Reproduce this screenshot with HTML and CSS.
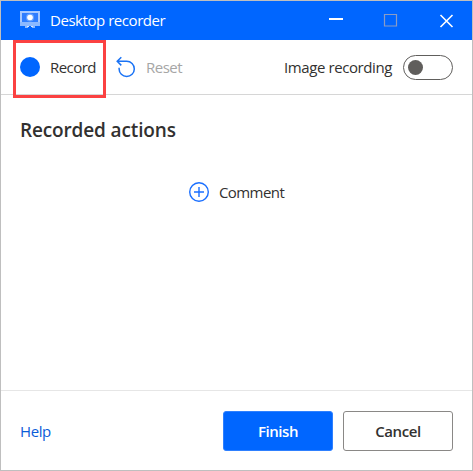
FILE: index.html
```html
<!DOCTYPE html>
<html lang="en">
<head>
<meta charset="utf-8">
<title>Desktop recorder</title>
<link rel="stylesheet" href="styles.css">
</head>
<body>
<div class="window">
  <header class="titlebar">
    <svg class="app-icon" width="20" height="18" viewBox="0 0 20 18">
      <path fill="#a6c8ff" d="M0 0h20v12H0z"/>
      <path fill="#2e7dff" d="M2 2h16v9H2z"/>
      <path fill="#8bb8ff" d="M0 11h20v4H0zM5 15h3v2H5zM12 15h3v2h-3z"/>
      <path fill="#d8e8ff" d="M7 15h2v1H7zM11 15h2v1h-2z"/>
      <circle cx="10" cy="6.5" r="4" fill="#69a3ff"/>
      <circle cx="10" cy="6.5" r="2.8" fill="#fff"/>
    </svg>
    <span class="title">Desktop recorder</span>
    <svg class="controls" width="126" height="16" viewBox="0 0 126 16">
      <path d="M0 6h14" stroke="#fff" stroke-width="2"/>
      <path d="M55.5 1.5h12v11.5h-12z" fill="none" stroke="#8b9cc4" stroke-width="1.2"/>
      <path d="M111.5 2l12 12m0-12l-12 12" stroke="#fff" stroke-width="1.6"/>
    </svg>
  </header>
  <div class="toolbar">
    <div class="record"><span class="dot"></span><span class="record-text">Record</span></div>
    <svg class="reset-icon" width="20" height="22" viewBox="0 0 20 22" fill="none" stroke="#1a73f5" stroke-width="1.5">
      <path d="M5.3 1.2L1.2 5.3l4.1 4.1M1.5 5.3h9.2a7.6 7.6 0 1 1-7.6 7.6v-1.2"/>
    </svg>
    <span class="reset-text">Reset</span>
    <span class="image-text">Image recording</span>
    <span class="toggle"><span class="knob"></span></span>
  </div>
  <main class="content">
    <h1 class="heading">Recorded actions</h1>
    <div class="comment">
      <svg width="20" height="20" viewBox="0 0 20 20" fill="none" stroke="#1a6fff" stroke-width="1.4">
        <circle cx="10" cy="10" r="9.3"/><path d="M10 5v10M5 10h10"/>
      </svg>
      <span class="comment-text">Comment</span>
    </div>
  </main>
  <footer class="footer">
    <a class="help">Help</a>
    <button class="btn primary"><span class="finish-text">Finish</span></button>
    <button class="btn"><span class="cancel-text">Cancel</span></button>
  </footer>
</div>
</body>
</html>
```
FILE: styles.css
```css
* { box-sizing: border-box; }
body {
  margin: 0;
  font: 15px/20px "Open Sans", "Noto Sans", sans-serif;
  color: #323130;
  white-space: nowrap;
}
.window {
  width: 473px;
  height: 471px;
  border: 1px solid #bfbfbf;
  background: #fff;
  display: flex;
  flex-direction: column;
}
.titlebar {
  height: 39px;
  background: #06f;
  color: #fff;
  display: flex;
  align-items: center;
  padding: 0 17px 0 19px;
}
.app-icon { margin: 0 10px 1px 0; }
.title { letter-spacing: -0.45px; margin-bottom: 2px; }
.controls { margin-left: auto; }
.toolbar {
  height: 55px;
  border-bottom: 1px solid #d6d6d6;
  display: flex;
  align-items: center;
  padding: 0 19px 0 12px;
}
.record {
  width: 93px;
  height: 58px;
  margin: 3px 0 0;
  border: 3px solid #fb4141;
  display: flex;
  align-items: center;
  padding: 0 0 3px 4px;
  flex: none;
}
.dot {
  width: 20px;
  height: 20px;
  border-radius: 50%;
  background: #06f;
  margin-right: 10px;
}
.record-text { letter-spacing: -0.55px; }
.reset-icon { margin: 0 10px 0 10px; }
.reset-text { color: #a6a6a6; letter-spacing: -0.5px; }
.image-text { margin-left: auto; letter-spacing: -0.4px; }
.toggle {
  width: 50px;
  height: 25px;
  margin-left: 11px;
  border: 1px solid #605e5c;
  border-radius: 13px;
  display: flex;
  align-items: center;
  padding-left: 4px;
}
.knob {
  width: 15px;
  height: 15px;
  border-radius: 50%;
  background: #605e5c;
}
.content { flex: 1; padding: 22px 19px 0; }
.heading {
  margin: 0;
  font-size: 19px;
  line-height: 26px;
  font-weight: 600;
  letter-spacing: -0.14px;
}
.comment {
  display: flex;
  align-items: center;
  margin: 39px 0 0 169px;
  gap: 10px;
}
.comment-text { letter-spacing: -0.58px; }
.footer {
  height: 80px;
  border-top: 1px solid #e6e6e6;
  display: flex;
  align-items: center;
  padding: 0 19px;
  gap: 10px;
}
.help { color: #0b5cd8; margin-right: auto; letter-spacing: -0.4px; }
.btn {
  width: 110px;
  height: 40px;
  border: 1px solid #8a8886;
  border-radius: 3px;
  background: #fff;
  color: #323130;
  font: inherit;
  font-weight: 600;
  padding: 0;
}
.primary { background: #06f; border-color: #2e80ff; color: #fff; }
.finish-text { letter-spacing: -0.45px; }
.cancel-text { letter-spacing: -0.42px; }
```
